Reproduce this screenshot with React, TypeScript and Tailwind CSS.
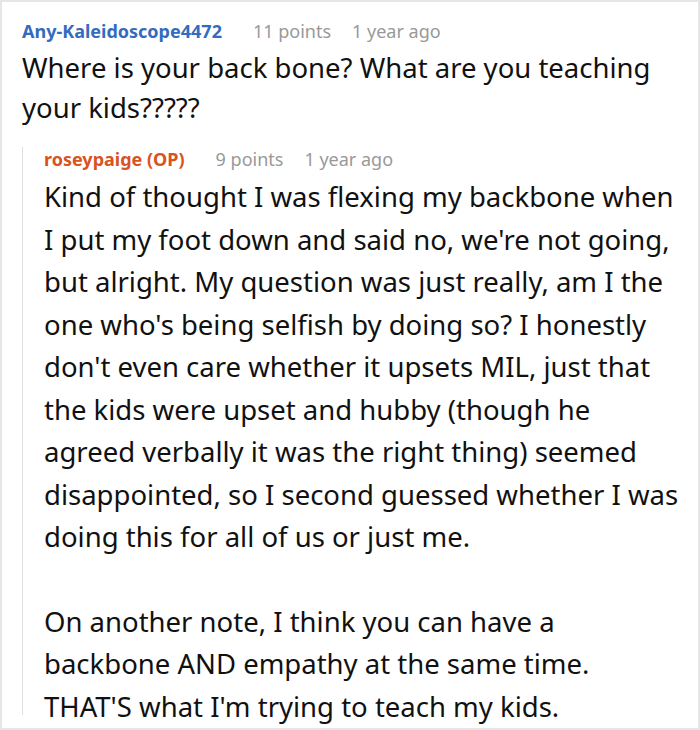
const font = { fontFamily: '"Noto Sans", "Open Sans", sans-serif' };

function Meta({ name, nameClass, points }: { name: string; nameClass: string; points: string }) {
  return (
    <div className="flex items-baseline text-[18px] leading-[24px]">
      <span className={`font-bold ${nameClass}`}>{name}</span>
      <span className="ml-[31px] text-[#999999]">{points}</span>
      <span className="ml-[21px] text-[#999999]">1 year ago</span>
    </div>
  );
}

export default function App() {
  return (
    <div style={font} className="w-[700px] h-[730px] bg-white border-2 border-[#e6e6e6] overflow-hidden">
      <div className="pl-[20px] pt-[17px] pr-[12px]">
        <Meta name="Any-Kaleidoscope4472" nameClass="text-[#336cbf]" points="11 points" />
        <p className="mt-[5px] text-[27.5px] leading-[40px] text-[#111111]">
          Where is your back bone? What are you teaching your kids?????
        </p>
        <div className="mt-[19px] border-l border-[#e0e0e0] pl-[21px] h-[568px]">
          <Meta name="roseypaige (OP)" nameClass="text-[#d9531e]" points="9 points" />
          <div className="mt-[5px] text-[27.5px] leading-[42.5px] text-[#111111]">
            <p>
              Kind of thought I was flexing my backbone when I put my foot down and said no, we're not going, but alright. My question was just really, am I the one who's being selfish by doing so? I honestly don't even care whether it upsets MIL, just that the kids were upset and hubby (though he agreed verbally it was the right thing) seemed disappointed, so I second guessed whether I was doing this for all of us or just me.
            </p>
            <p className="mt-[42px]">
              On another note, I think you can have a backbone AND empathy at the same time.
              <br />
              THAT'S what I'm trying to teach my kids.
            </p>
          </div>
        </div>
      </div>
    </div>
  );
}
